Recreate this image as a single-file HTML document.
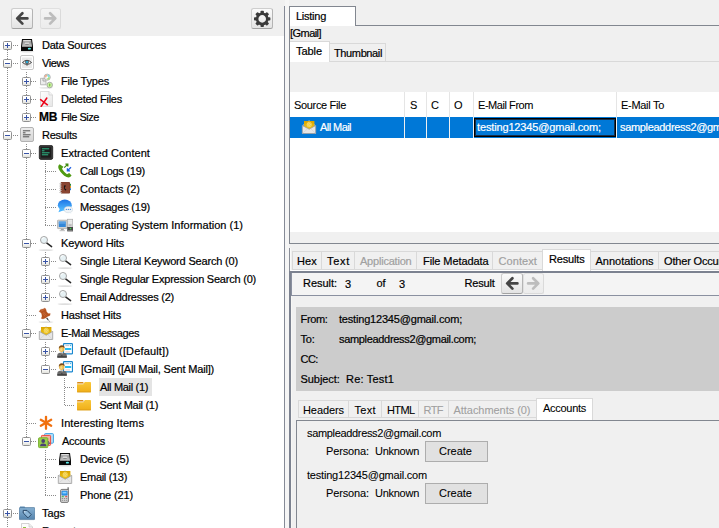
<!DOCTYPE html>
<html><head><meta charset="utf-8"><title>Autopsy</title>
<style>
html,body{margin:0;padding:0}
body{width:719px;height:528px;overflow:hidden;background:#f0f0f0;font-family:"Liberation Sans",sans-serif;font-size:11px;color:#000;position:relative}
div,span{box-sizing:border-box}
.a{position:absolute}
.t{position:absolute;white-space:nowrap;line-height:14px;height:14px;-webkit-text-stroke:0.2px currentColor}
.vd{position:absolute;width:1px;background-image:linear-gradient(to bottom,#8a8a8a 50%,rgba(255,255,255,0) 50%);background-size:1px 2px}
.hd{position:absolute;height:1px;background-image:linear-gradient(to right,#8a8a8a 50%,rgba(255,255,255,0) 50%);background-size:2px 1px}
.ex{position:absolute;width:9px;height:9px;border:1px solid #919191;background:linear-gradient(#fff 40%,#e2e2dc);border-radius:1.5px}
.ex i{position:absolute;left:1px;top:3px;width:5px;height:1px;background:#3853a6}
.ex b{position:absolute;left:3px;top:1px;width:1px;height:5px;background:#3853a6}
.ic{position:absolute;width:16px;height:16px}
.ic svg{display:block}
.tb{position:absolute;border:1px solid #adadad;background:#e1e1e1;border-radius:2.5px}
.tab{position:absolute;border:1px solid #d9d9d9;border-bottom:none;background:#f0f0f0;white-space:nowrap;line-height:14px}
.tab.sel{background:#fff}
.dis{color:#a0a0a0}
.n{-webkit-text-stroke:0.08px currentColor}
</style></head><body>

<div class="a" style="left:0;top:36px;width:284px;height:492px;background:#fff"></div>
<div class="a" style="left:285px;top:0;width:4px;height:528px;background:#f5f5f5"></div>
<div class="tb" style="left:11px;top:8px;width:22px;height:21px;background:linear-gradient(#fbfbfb,#e3e3e3);border-color:#cecece #b4b4b4 #a2a2a2 #cecece"><svg width="20" height="19" viewBox="0 0 20 19" style="display:block"><path d="M15.4 9.4H6.4M10.4 4.2L5.2 9.4L10.4 14.600000000000001" fill="none" stroke="#454545" stroke-width="2.7" stroke-linecap="round" stroke-linejoin="round"/></svg></div>
<div class="tb" style="left:40px;top:8px;width:21px;height:21px;background:linear-gradient(#f4f4f4,#ececec);border-color:#e0e0e0 #dadada #dadada #e0e0e0"><svg width="19" height="19" viewBox="0 0 19 19" style="display:block"><path d="M4.1 9.4H13.1M9.1 4.2L14.3 9.4L9.1 14.600000000000001" fill="none" stroke="#bdbdbd" stroke-width="2.7" stroke-linecap="round" stroke-linejoin="round"/></svg></div>
<div class="tb" style="left:251px;top:8px;width:22px;height:21px;background:linear-gradient(#fbfbfb,#e3e3e3);border-color:#cecece #b4b4b4 #a2a2a2 #cecece"><svg width="20" height="19" viewBox="0 0 20 19" ><g transform="translate(10.2,9.9)" fill="#3a3a3a"><rect x="-1.7" y="-8.2" width="3.4" height="3.2" rx="0.8" transform="rotate(0)"/><rect x="-1.7" y="-8.2" width="3.4" height="3.2" rx="0.8" transform="rotate(45)"/><rect x="-1.7" y="-8.2" width="3.4" height="3.2" rx="0.8" transform="rotate(90)"/><rect x="-1.7" y="-8.2" width="3.4" height="3.2" rx="0.8" transform="rotate(135)"/><rect x="-1.7" y="-8.2" width="3.4" height="3.2" rx="0.8" transform="rotate(180)"/><rect x="-1.7" y="-8.2" width="3.4" height="3.2" rx="0.8" transform="rotate(225)"/><rect x="-1.7" y="-8.2" width="3.4" height="3.2" rx="0.8" transform="rotate(270)"/><rect x="-1.7" y="-8.2" width="3.4" height="3.2" rx="0.8" transform="rotate(315)"/><circle r="5.1" fill="none" stroke="#3a3a3a" stroke-width="2.6"/></g></svg></div>
<div class="a" style="left:284px;top:6px;width:1px;height:522px;background:#858a96"></div>
<div class="vd" style="left:7px;top:46px;height:486px"></div>
<div class="vd" style="left:26px;top:72px;height:46px"></div>
<div class="vd" style="left:26px;top:144px;height:298px"></div>
<div class="vd" style="left:45px;top:162px;height:64px"></div>
<div class="vd" style="left:45px;top:252px;height:46px"></div>
<div class="vd" style="left:45px;top:342px;height:28px"></div>
<div class="vd" style="left:45px;top:450px;height:46px"></div>
<div class="vd" style="left:64px;top:378px;height:28px"></div>
<div class="hd" style="left:13px;top:45px;width:5px"></div>
<div class="ex" style="left:3px;top:41px"><i></i><b></b></div>
<div class="ic" style="left:19px;top:37px"><svg width="16" height="16" viewBox="0 0 16 16" ><defs><linearGradient id="dg" x1="0" y1="0" x2="0" y2="1"><stop offset="0" stop-color="#8e8e8e"/><stop offset="1" stop-color="#c4c4c4"/></linearGradient></defs><ellipse cx="8" cy="14.6" rx="7" ry="0.8" fill="#000" opacity="0.12"/><path d="M3 2H13L14 9.5V14H2V9.5Z" fill="#0a0a0a"/><path d="M3.8 3H12.2L13 9.8H3Z" fill="url(#dg)"/><rect x="4.3" y="3.2" width="7.4" height="1" fill="#f2f2f2"/><rect x="5.8" y="5.6" width="4.4" height="2.2" rx="0.6" fill="#d8d8d8"/><rect x="6.2" y="7" width="3.6" height="0.8" fill="#7a7a7a"/><ellipse cx="10.4" cy="11.7" rx="1.6" ry="0.9" fill="#5ef0f0"/></svg></div>
<div class="t" style="left:42px;top:38px;letter-spacing:-0.221px;">Data Sources</div>
<div class="hd" style="left:13px;top:63px;width:5px"></div>
<div class="ex" style="left:3px;top:59px"><i></i></div>
<div class="ic" style="left:19px;top:55px"><svg width="16" height="16" viewBox="0 0 16 16" ><rect x="1.5" y="0.5" width="13" height="14" rx="1.5" fill="#fff" stroke="#c6c6c6"/><rect x="3" y="2.5" width="10" height="10.5" fill="#ebebeb"/><path d="M3.5 7.5Q8 3.1 12.5 7.5Q8 11.3 3.5 7.5Z" fill="#f6f6f6" stroke="#3a3a3a" stroke-width="0.95"/><circle cx="8" cy="7.1" r="1.9" fill="#5a3a30"/><circle cx="8" cy="7.1" r="1.4" fill="#27a6d2"/><rect x="7" y="10" width="2" height="1" fill="#b0b0b0"/></svg></div>
<div class="t" style="left:42px;top:56px;letter-spacing:-0.431px;">Views</div>
<div class="hd" style="left:31px;top:81px;width:6px"></div>
<div class="ex" style="left:22px;top:77px"><i></i><b></b></div>
<div class="ic" style="left:38px;top:73px"><svg width="16" height="16" viewBox="0 0 16 16" ><ellipse cx="8" cy="14.8" rx="7" ry="0.9" fill="#000" opacity="0.10"/><path d="M2.5 5.3H8V11.8H2.5Z" fill="#ececec" stroke="#b4b4b4" stroke-width="0.9"/><path d="M5 5.3V8H8" fill="none" stroke="#a0a0a0" stroke-width="0.9"/><circle cx="9.2" cy="4.2" r="3.1" fill="#e8e8e8" stroke="#a8a8a8" stroke-width="0.8"/><path d="M9.2 1.6A2.6 2.6 0 0 1 11.8 4.2L9.2 4.2Z" fill="#7fe0e0"/><path d="M11.8 4.2A2.6 2.6 0 0 1 9.2 6.8L9.2 4.2Z" fill="#a8e07a"/><path d="M6.6 4.2A2.6 2.6 0 0 1 9.2 1.6L9.2 4.2Z" fill="#f0b090"/><circle cx="9.2" cy="4.2" r="1" fill="#fff"/><circle cx="11.7" cy="12" r="2.8" fill="#c8f0a0" stroke="#a0a0a0" stroke-width="0.8"/><rect x="11.1" y="10.6" width="1.2" height="2.8" rx="0.6" fill="#78c040"/></svg></div>
<div class="t" style="left:61px;top:74px;letter-spacing:-0.194px;">File Types</div>
<div class="hd" style="left:31px;top:99px;width:6px"></div>
<div class="ex" style="left:22px;top:95px"><i></i><b></b></div>
<div class="ic" style="left:38px;top:91px"><svg width="16" height="16" viewBox="0 0 16 16" ><defs><linearGradient id="pg" x1="0" y1="0" x2="1" y2="1"><stop offset="0" stop-color="#ffffff"/><stop offset="1" stop-color="#e6e6e6"/></linearGradient></defs><path d="M2.5 0.5H11L14.5 4V15.5H2.5Z" fill="url(#pg)" stroke="#d4d4d4" stroke-width="0.8"/><path d="M11 0.5V4H14.5" fill="#f4f4f4" stroke="#d0d0d0" stroke-width="0.7"/><path d="M2.6 8.6L9.4 13.8M8.8 7L3.2 15.4" fill="none" stroke="#ec0016" stroke-width="1.5" stroke-linecap="round"/></svg></div>
<div class="t" style="left:61px;top:92px;letter-spacing:-0.246px;">Deleted Files</div>
<div class="hd" style="left:31px;top:117px;width:6px"></div>
<div class="ex" style="left:22px;top:113px"><i></i><b></b></div>
<div class="t" style="left:38.9px;top:109.5px;font-weight:bold;font-size:12px;line-height:15px;height:15px;letter-spacing:-0.1px">MB</div>
<div class="t" style="left:61px;top:110px;letter-spacing:-0.465px;">File Size</div>
<div class="hd" style="left:13px;top:135px;width:5px"></div>
<div class="ex" style="left:3px;top:131px"><i></i></div>
<div class="ic" style="left:19px;top:127px"><svg width="16" height="16" viewBox="0 0 16 16" ><defs><linearGradient id="rg" x1="0" y1="0" x2="0" y2="1"><stop offset="0" stop-color="#ececec"/><stop offset="1" stop-color="#d6d6d6"/></linearGradient></defs><rect x="1.5" y="0.5" width="13" height="14" rx="1.5" fill="url(#rg)" stroke="#b2b2b2"/><g fill="#3a3a3a" opacity="0.85"><rect x="3.9" y="3.3" width="7.3" height="1"/><rect x="3.9" y="5.3" width="2.6" height="1"/><rect x="3.9" y="7.3" width="7.7" height="1"/><rect x="3.9" y="9.3" width="6.3" height="1"/></g></svg></div>
<div class="t" style="left:42px;top:128px;letter-spacing:-0.241px;">Results</div>
<div class="hd" style="left:31px;top:153px;width:6px"></div>
<div class="ex" style="left:22px;top:149px"><i></i></div>
<div class="ic" style="left:38px;top:145px"><svg width="16" height="16" viewBox="0 0 16 16" ><rect x="1.3" y="0.4" width="13.4" height="14" rx="1.6" fill="#333" stroke="#1e1e1e" stroke-width="0.8"/><rect x="3" y="2.2" width="10" height="10.4" fill="#1c1c1c"/><g fill="#2fd39a" opacity="0.85"><rect x="3.9" y="3.3" width="7.3" height="1"/><rect x="3.9" y="5.3" width="2.6" height="1"/><rect x="3.9" y="7.3" width="7.7" height="1"/><rect x="3.9" y="9.3" width="6.3" height="1"/></g></svg></div>
<div class="t" style="left:61px;top:146px;letter-spacing:0.055px;">Extracted Content</div>
<div class="hd" style="left:45px;top:171px;width:11px"></div>
<div class="ic" style="left:57px;top:163px"><svg width="16" height="16" viewBox="0 0 16 16" ><path d="M2.6 1.2C1 2.4 0.8 4.2 2 6.4C3.6 9.4 6.4 12.4 9.6 14C11.6 15 13.2 14.4 14.6 12.6L12.2 10L10 11.2C8 10 6.2 8 5 5.8L6.4 3.8Z" fill="#4f9a12"/><path d="M7.2 4.6L10.4 1.6M8.4 1.2H10.8V3.6" fill="none" stroke="#3d8a0c" stroke-width="1.3"/><path d="M14 4.2L10.8 7.4M10.4 5.2V7.8H13" fill="none" stroke="#1f5fe0" stroke-width="1.3"/></svg></div>
<div class="t" style="left:80px;top:164px;letter-spacing:-0.249px;">Call Logs (19)</div>
<div class="hd" style="left:45px;top:189px;width:11px"></div>
<div class="ic" style="left:57px;top:181px"><svg width="16" height="16" viewBox="0 0 16 16" ><rect x="12.4" y="2.8" width="1.6" height="2" fill="#2f8a3a"/><rect x="12.4" y="5" width="1.6" height="2" fill="#e89020"/><rect x="12.4" y="7.2" width="1.6" height="2" fill="#2878c8"/><rect x="3.6" y="1" width="9.4" height="11.6" rx="1" fill="#7b3a2a"/><rect x="4.4" y="1.6" width="8" height="10.4" rx="0.8" fill="#8a4633"/><path d="M7.4 4.2C6.6 5.6 6.8 8 8.2 9.6L9.4 9L8.8 7.8L8.2 8C7.8 7.2 7.8 6.4 8 5.8L8.6 5.8L8.6 4.2Z" fill="#141414"/><g fill="#c8c8c8"><rect x="2.2" y="2.4" width="2.4" height="0.9"/><rect x="2.2" y="4.6" width="2.4" height="0.9"/><rect x="2.2" y="6.8" width="2.4" height="0.9"/><rect x="2.2" y="9" width="2.4" height="0.9"/><rect x="2.2" y="11" width="2.4" height="0.9"/></g></svg></div>
<div class="t" style="left:80px;top:182px;letter-spacing:0.007px;">Contacts (2)</div>
<div class="hd" style="left:45px;top:207px;width:11px"></div>
<div class="ic" style="left:57px;top:199px"><svg width="16" height="16" viewBox="0 0 16 16" ><defs><linearGradient id="mg" x1="0" y1="0" x2="0" y2="1"><stop offset="0" stop-color="#1c74e6"/><stop offset="1" stop-color="#56c0ff"/></linearGradient></defs><ellipse cx="7.8" cy="6.2" rx="7" ry="5.6" fill="url(#mg)"/><path d="M3 9.5L1.4 13.2L6 11.4Z" fill="#4ab4ff"/><ellipse cx="11.4" cy="10.6" rx="4.2" ry="3.1" fill="#eef3f7" stroke="#c4d0d8" stroke-width="0.5"/><path d="M13 12.8L14.6 14.8L11.6 13.4Z" fill="#e4ebf0"/><circle cx="9.4" cy="10.4" r="0.7" fill="#5a98e0"/><circle cx="11.4" cy="10.4" r="0.7" fill="#5a98e0"/><circle cx="13.4" cy="10.4" r="0.7" fill="#5a98e0"/></svg></div>
<div class="t" style="left:80px;top:200px;letter-spacing:-0.213px;">Messages (19)</div>
<div class="hd" style="left:45px;top:225px;width:11px"></div>
<div class="ic" style="left:57px;top:217px"><svg width="16" height="16" viewBox="0 0 16 16" ><rect x="0.4" y="3.2" width="9.8" height="8.4" rx="0.8" fill="#d2d2d2" stroke="#a4a4a4" stroke-width="0.7"/><rect x="1.8" y="4.6" width="7" height="5.4" fill="#3487d8"/><rect x="1.8" y="4.6" width="7" height="2.2" fill="#5aa2e6"/><rect x="3.8" y="11.8" width="3" height="1.6" fill="#a0a0a0"/><rect x="2.6" y="13.2" width="5.4" height="1" fill="#c0c0c0"/><rect x="10.4" y="2.2" width="5.4" height="8" fill="#dcdcdc" stroke="#a4a4a4" stroke-width="0.6"/><rect x="11.2" y="3.4" width="3.8" height="1" fill="#f4f4f4"/><rect x="11.2" y="5.4" width="3.8" height="1" fill="#f4f4f4"/><rect x="11.6" y="7.4" width="3" height="1.4" fill="#b4b4b4"/><rect x="10.2" y="10" width="5.8" height="4.4" fill="#4a4a4a"/><rect x="12.8" y="11" width="1.4" height="1.2" fill="#38e048"/><rect x="10.6" y="13" width="5" height="0.8" fill="#8a8a8a"/></svg></div>
<div class="t" style="left:80px;top:218px;letter-spacing:0.012px;">Operating System Information (1)</div>
<div class="hd" style="left:31px;top:243px;width:6px"></div>
<div class="ex" style="left:22px;top:239px"><i></i></div>
<div class="ic" style="left:38px;top:235px"><svg width="16" height="16" viewBox="0 0 16 16" ><ellipse cx="8" cy="15.1" rx="7.6" ry="0.8" fill="#000" opacity="0.13"/><path d="M8.6 7.8L13.6 11.6" stroke="#262626" stroke-width="1.5" stroke-linecap="round"/><circle cx="6" cy="5" r="3.5" fill="#e6f1f4" stroke="#a6a6a6" stroke-width="1"/><path d="M3.8 4.4A2.4 2.4 0 0 1 6.4 2.6" fill="none" stroke="#fff" stroke-width="0.9"/></svg></div>
<div class="t" style="left:61px;top:236px;letter-spacing:-0.150px;">Keyword Hits</div>
<div class="hd" style="left:51px;top:261px;width:5px"></div>
<div class="ex" style="left:41px;top:257px"><i></i><b></b></div>
<div class="ic" style="left:57px;top:253px"><svg width="16" height="16" viewBox="0 0 16 16" ><ellipse cx="8" cy="15.1" rx="7.6" ry="0.8" fill="#000" opacity="0.13"/><path d="M8.6 7.8L13.6 11.6" stroke="#262626" stroke-width="1.5" stroke-linecap="round"/><circle cx="6" cy="5" r="3.5" fill="#e6f1f4" stroke="#a6a6a6" stroke-width="1"/><path d="M3.8 4.4A2.4 2.4 0 0 1 6.4 2.6" fill="none" stroke="#fff" stroke-width="0.9"/></svg></div>
<div class="t" style="left:80px;top:254px;letter-spacing:-0.178px;">Single Literal Keyword Search (0)</div>
<div class="hd" style="left:51px;top:279px;width:5px"></div>
<div class="ex" style="left:41px;top:275px"><i></i><b></b></div>
<div class="ic" style="left:57px;top:271px"><svg width="16" height="16" viewBox="0 0 16 16" ><ellipse cx="8" cy="15.1" rx="7.6" ry="0.8" fill="#000" opacity="0.13"/><path d="M8.6 7.8L13.6 11.6" stroke="#262626" stroke-width="1.5" stroke-linecap="round"/><circle cx="6" cy="5" r="3.5" fill="#e6f1f4" stroke="#a6a6a6" stroke-width="1"/><path d="M3.8 4.4A2.4 2.4 0 0 1 6.4 2.6" fill="none" stroke="#fff" stroke-width="0.9"/></svg></div>
<div class="t" style="left:80px;top:272px;letter-spacing:-0.224px;">Single Regular Expression Search (0)</div>
<div class="hd" style="left:51px;top:297px;width:5px"></div>
<div class="ex" style="left:41px;top:293px"><i></i><b></b></div>
<div class="ic" style="left:57px;top:289px"><svg width="16" height="16" viewBox="0 0 16 16" ><ellipse cx="8" cy="15.1" rx="7.6" ry="0.8" fill="#000" opacity="0.13"/><path d="M8.6 7.8L13.6 11.6" stroke="#262626" stroke-width="1.5" stroke-linecap="round"/><circle cx="6" cy="5" r="3.5" fill="#e6f1f4" stroke="#a6a6a6" stroke-width="1"/><path d="M3.8 4.4A2.4 2.4 0 0 1 6.4 2.6" fill="none" stroke="#fff" stroke-width="0.9"/></svg></div>
<div class="t" style="left:80px;top:290px;letter-spacing:-0.234px;">Email Addresses (2)</div>
<div class="hd" style="left:27px;top:315px;width:10px"></div>
<div class="ic" style="left:38px;top:307px"><svg width="16" height="16" viewBox="0 0 16 16" ><ellipse cx="8" cy="15.1" rx="7.6" ry="0.8" fill="#000" opacity="0.12"/><path d="M8.6 10.8L10.2 12.8" stroke="#3c3c3c" stroke-width="1.2"/><path d="M10.2 12.8L11.8 14.8" stroke="#9a9a9a" stroke-width="1"/><path d="M1 4.4L2.6 2.4L5 1.9L7 0.9L8 2.6L8.6 4.8L10.2 6.5L12.3 6.4L12 8.4L9.6 9.6L7.6 11L5 12L3.2 11.4L4 9.2L3.6 6.8L2.6 5.6Z" fill="#b5531f" stroke="#b5531f" stroke-width="0.2" stroke-linejoin="round"/><path d="M2.6 4.2L6.6 2.4M4.8 6.2L7 9.4M5.4 5L8.4 8.4" stroke="#cc6f42" stroke-width="0.8" fill="none" opacity="0.9"/></svg></div>
<div class="t" style="left:61px;top:308px;letter-spacing:-0.197px;">Hashset Hits</div>
<div class="hd" style="left:31px;top:333px;width:6px"></div>
<div class="ex" style="left:22px;top:329px"><i></i></div>
<div class="ic" style="left:38px;top:325px"><svg width="16" height="16" viewBox="0 0 16 16" ><defs><linearGradient id="yg" x1="0" y1="0" x2="0" y2="1"><stop offset="0" stop-color="#d9a400"/><stop offset="1" stop-color="#f3c81e"/></linearGradient></defs><path d="M1.3 6.6L3 5V6.6Z M14.7 6.6L13 5V6.6Z" fill="#c8c8c8"/><rect x="3" y="2" width="10.4" height="9" fill="url(#yg)"/><path d="M7.4 1.4H8.8V2.2H7.4Z" fill="#c8c8c8"/><circle cx="8.2" cy="5.4" r="2.5" fill="#f7dc6a"/><path d="M6.4 3.8L10 7M6 5.6L8.4 7.8M8 3.2L10.4 5.4" stroke="#e6bc2a" stroke-width="0.5" fill="none"/><path d="M1.3 6.4L8.2 10.2L14.7 6.4V14.5H1.3Z" fill="#e6e6e6" stroke="#9c9c9c" stroke-width="0.8" stroke-linejoin="round"/><path d="M1.6 14.2L6.6 9.8M14.4 14.2L9.8 9.8" stroke="#d2d2d2" stroke-width="0.7" fill="none"/></svg></div>
<div class="t" style="left:61px;top:326px;letter-spacing:-0.424px;">E-Mail Messages</div>
<div class="hd" style="left:51px;top:351px;width:5px"></div>
<div class="ex" style="left:41px;top:347px"><i></i><b></b></div>
<div class="ic" style="left:57px;top:343px"><svg width="16" height="16" viewBox="0 0 16 16" ><rect x="6.5" y="0.7" width="9" height="10.2" rx="0.8" fill="#fff" stroke="#1a88d0" stroke-width="1.2"/><rect x="8.4" y="2.3" width="3.8" height="0.8" fill="#aab8c4"/><circle cx="13.6" cy="2.6" r="0.7" fill="#28b0ea"/><rect x="8" y="5" width="6.2" height="2" fill="#27bdf0"/><rect x="8.4" y="8.6" width="4.6" height="0.7" fill="#f0b4a4"/><path d="M0.3 14.6V12.4C0.3 10.6 2 9.6 4.8 9.6C7.6 9.6 9.8 10.6 9.8 12.4V14.6Z" fill="#6a6a6a"/><path d="M0.3 13.2H9.8V14.7H0.3Z" fill="#3e3e3e"/><path d="M3.6 9.6L4.8 12.6L6 9.6Z" fill="#f4f4f4"/><rect x="4.45" y="9.8" width="0.8" height="3.4" fill="#262626"/><ellipse cx="4.7" cy="6" rx="2.7" ry="3" fill="#e9b84e"/><path d="M1.9 6C1.5 3.4 2.8 2.2 4.8 2.2C6.8 2.2 7.9 3.4 7.5 5.6C7 4.6 6.2 4.1 4.9 4.1C3.5 4.1 2.5 4.8 1.9 6Z" fill="#7b4a17"/><ellipse cx="4.3" cy="6.6" rx="1.2" ry="1.6" fill="#f7dd90" opacity="0.85"/></svg></div>
<div class="t" style="left:80px;top:344px;letter-spacing:0.147px;">Default ([Default])</div>
<div class="hd" style="left:51px;top:369px;width:5px"></div>
<div class="ex" style="left:41px;top:365px"><i></i></div>
<div class="ic" style="left:57px;top:361px"><svg width="16" height="16" viewBox="0 0 16 16" ><rect x="6.5" y="0.7" width="9" height="10.2" rx="0.8" fill="#fff" stroke="#1a88d0" stroke-width="1.2"/><rect x="8.4" y="2.3" width="3.8" height="0.8" fill="#aab8c4"/><circle cx="13.6" cy="2.6" r="0.7" fill="#28b0ea"/><rect x="8" y="5" width="6.2" height="2" fill="#27bdf0"/><rect x="8.4" y="8.6" width="4.6" height="0.7" fill="#f0b4a4"/><path d="M0.3 14.6V12.4C0.3 10.6 2 9.6 4.8 9.6C7.6 9.6 9.8 10.6 9.8 12.4V14.6Z" fill="#6a6a6a"/><path d="M0.3 13.2H9.8V14.7H0.3Z" fill="#3e3e3e"/><path d="M3.6 9.6L4.8 12.6L6 9.6Z" fill="#f4f4f4"/><rect x="4.45" y="9.8" width="0.8" height="3.4" fill="#262626"/><ellipse cx="4.7" cy="6" rx="2.7" ry="3" fill="#e9b84e"/><path d="M1.9 6C1.5 3.4 2.8 2.2 4.8 2.2C6.8 2.2 7.9 3.4 7.5 5.6C7 4.6 6.2 4.1 4.9 4.1C3.5 4.1 2.5 4.8 1.9 6Z" fill="#7b4a17"/><ellipse cx="4.3" cy="6.6" rx="1.2" ry="1.6" fill="#f7dd90" opacity="0.85"/></svg></div>
<div class="t" style="left:81px;top:362px;letter-spacing:-0.185px;">[Gmail] ([All Mail, Sent Mail])</div>
<div class="hd" style="left:65px;top:387px;width:10px"></div>
<div class="a" style="left:99px;top:378px;width:53px;height:18px;background:#e4e4e4"></div>
<div class="ic" style="left:76px;top:379px"><svg width="16" height="16" viewBox="0 0 16 16" ><defs><linearGradient id="fg" x1="0" y1="0" x2="0" y2="1"><stop offset="0" stop-color="#f9c83a"/><stop offset="1" stop-color="#f0ae18"/></linearGradient></defs><path d="M1 4.2C1 3.5 1.4 3 2 3H7L8 4.6H1Z" fill="#d88a1a"/><path d="M1 5.2H7.4L8.8 3H14.2C14.7 3 15 3.3 15 3.8V12.5C15 13 14.7 13.3 14.2 13.3H1.8C1.3 13.3 1 13 1 12.5Z" fill="url(#fg)"/><rect x="1" y="12.6" width="14" height="0.7" fill="#d89a18"/></svg></div>
<div class="t" style="left:100px;top:380px;letter-spacing:-0.329px;">All Mail (1)</div>
<div class="hd" style="left:65px;top:405px;width:10px"></div>
<div class="ic" style="left:76px;top:397px"><svg width="16" height="16" viewBox="0 0 16 16" ><defs><linearGradient id="fg" x1="0" y1="0" x2="0" y2="1"><stop offset="0" stop-color="#f9c83a"/><stop offset="1" stop-color="#f0ae18"/></linearGradient></defs><path d="M1 4.2C1 3.5 1.4 3 2 3H7L8 4.6H1Z" fill="#d88a1a"/><path d="M1 5.2H7.4L8.8 3H14.2C14.7 3 15 3.3 15 3.8V12.5C15 13 14.7 13.3 14.2 13.3H1.8C1.3 13.3 1 13 1 12.5Z" fill="url(#fg)"/><rect x="1" y="12.6" width="14" height="0.7" fill="#d89a18"/></svg></div>
<div class="t" style="left:99.5px;top:398px;letter-spacing:-0.297px;">Sent Mail (1)</div>
<div class="hd" style="left:27px;top:423px;width:10px"></div>
<div class="ic" style="left:38px;top:415px"><svg width="16" height="16" viewBox="0 0 16 16" ><g transform="translate(8,7.8)" stroke="#f0700f" stroke-width="2.3" stroke-linecap="round"><path d="M0 0V-6" transform="rotate(0)"/><path d="M0 0V-6" transform="rotate(60)"/><path d="M0 0V-6" transform="rotate(120)"/><path d="M0 0V-6" transform="rotate(180)"/><path d="M0 0V-6" transform="rotate(240)"/><path d="M0 0V-6" transform="rotate(300)"/></g></svg></div>
<div class="t" style="left:61px;top:416px;letter-spacing:0.098px;">Interesting Items</div>
<div class="hd" style="left:31px;top:441px;width:6px"></div>
<div class="ex" style="left:22px;top:437px"><i></i></div>
<div class="ic" style="left:38px;top:433px"><svg width="16" height="16" viewBox="0 0 16 16" ><rect x="6.6" y="0.6" width="8.8" height="9.6" rx="0.8" fill="#b8e0f8" stroke="#3ea4e4" stroke-width="1"/><rect x="3.4" y="2.4" width="9.2" height="10" rx="0.8" fill="#f8b0a0" stroke="#f0483a" stroke-width="1"/><path d="M10.4 8V12M11.4 9.4V11" stroke="#5a4a78" stroke-width="0.9"/><rect x="0.6" y="4.8" width="9.2" height="9.8" rx="0.8" fill="#9ad04a" stroke="#78b032" stroke-width="1"/><circle cx="5.2" cy="8" r="1.9" fill="#4b4272"/><path d="M2 13.2C2 11 3.4 10.4 5.2 10.4C7 10.4 8.4 11 8.4 13.2Z" fill="#4b4272"/></svg></div>
<div class="t" style="left:62px;top:434px;letter-spacing:-0.281px;">Accounts</div>
<div class="hd" style="left:45px;top:459px;width:11px"></div>
<div class="ic" style="left:57px;top:451px"><svg width="16" height="16" viewBox="0 0 16 16" ><defs><linearGradient id="dg" x1="0" y1="0" x2="0" y2="1"><stop offset="0" stop-color="#8e8e8e"/><stop offset="1" stop-color="#c4c4c4"/></linearGradient></defs><ellipse cx="8" cy="14.6" rx="7" ry="0.8" fill="#000" opacity="0.12"/><path d="M3 2H13L14 9.5V14H2V9.5Z" fill="#0a0a0a"/><path d="M3.8 3H12.2L13 9.8H3Z" fill="url(#dg)"/><rect x="4.3" y="3.2" width="7.4" height="1" fill="#f2f2f2"/><rect x="5.8" y="5.6" width="4.4" height="2.2" rx="0.6" fill="#d8d8d8"/><rect x="6.2" y="7" width="3.6" height="0.8" fill="#7a7a7a"/><ellipse cx="10.4" cy="11.7" rx="1.6" ry="0.9" fill="#5ef0f0"/></svg></div>
<div class="t" style="left:80px;top:452px;letter-spacing:-0.113px;">Device (5)</div>
<div class="hd" style="left:45px;top:477px;width:11px"></div>
<div class="ic" style="left:57px;top:469px"><svg width="16" height="16" viewBox="0 0 16 16" ><defs><linearGradient id="yg" x1="0" y1="0" x2="0" y2="1"><stop offset="0" stop-color="#d9a400"/><stop offset="1" stop-color="#f3c81e"/></linearGradient></defs><path d="M1.3 6.6L3 5V6.6Z M14.7 6.6L13 5V6.6Z" fill="#c8c8c8"/><rect x="3" y="2" width="10.4" height="9" fill="url(#yg)"/><path d="M7.4 1.4H8.8V2.2H7.4Z" fill="#c8c8c8"/><circle cx="8.2" cy="5.4" r="2.5" fill="#f7dc6a"/><path d="M6.4 3.8L10 7M6 5.6L8.4 7.8M8 3.2L10.4 5.4" stroke="#e6bc2a" stroke-width="0.5" fill="none"/><path d="M1.3 6.4L8.2 10.2L14.7 6.4V14.5H1.3Z" fill="#e6e6e6" stroke="#9c9c9c" stroke-width="0.8" stroke-linejoin="round"/><path d="M1.6 14.2L6.6 9.8M14.4 14.2L9.8 9.8" stroke="#d2d2d2" stroke-width="0.7" fill="none"/></svg></div>
<div class="t" style="left:80px;top:470px;letter-spacing:-0.312px;">Email (13)</div>
<div class="hd" style="left:45px;top:495px;width:11px"></div>
<div class="ic" style="left:57px;top:487px"><svg width="16" height="16" viewBox="0 0 16 16" ><rect x="10.6" y="0.3" width="1" height="3" fill="#3a3a3a"/><rect x="3.6" y="2.4" width="7.8" height="13" rx="1.2" fill="#d6d6d6" stroke="#5a5a5a" stroke-width="0.8"/><rect x="4.8" y="4" width="5.4" height="4.2" rx="0.5" fill="#2f9cf2" stroke="#1a6cc0" stroke-width="0.5"/><rect x="5.6" y="4.8" width="3.8" height="1.6" fill="#8ad0ff"/><rect x="4.8" y="9.2" width="2" height="1" fill="#38b838"/><rect x="8.2" y="9.2" width="2" height="1" fill="#e03a3a"/><g fill="#8e8e8e"><rect x="4.8" y="11" width="1.3" height="1"/><rect x="6.9" y="11" width="1.3" height="1"/><rect x="8.9" y="11" width="1.3" height="1"/><rect x="4.8" y="12.8" width="1.3" height="1"/><rect x="6.9" y="12.8" width="1.3" height="1"/><rect x="8.9" y="12.8" width="1.3" height="1"/></g></svg></div>
<div class="t" style="left:80px;top:488px;letter-spacing:-0.144px;">Phone (21)</div>
<div class="hd" style="left:13px;top:513px;width:5px"></div>
<div class="ex" style="left:3px;top:509px"><i></i><b></b></div>
<div class="ic" style="left:19px;top:505px"><svg width="16" height="16" viewBox="0 0 16 16" ><defs><linearGradient id="tg" x1="0" y1="0" x2="0" y2="1"><stop offset="0" stop-color="#86b0d2"/><stop offset="1" stop-color="#5583ac"/></linearGradient></defs><path d="M1 1.6H5.6L6.4 3H1Z" fill="#5e8cb4"/><rect x="0.2" y="2.6" width="15.6" height="12" rx="0.8" fill="url(#tg)" stroke="#3f6a90" stroke-width="0.6"/><path d="M4.2 5.4H8L12.2 9.6L9 12.8L4.2 8Z" fill="#8db6d8" stroke="#24405e" stroke-width="0.9" stroke-linejoin="round"/><circle cx="5.8" cy="6.8" r="0.7" fill="#dfe8f0"/></svg></div>
<div class="t" style="left:42px;top:506px;letter-spacing:-0.062px;">Tags</div>
<div class="hd" style="left:7px;top:531px;width:11px"></div>
<div class="ic" style="left:19px;top:523px"><svg width="16" height="16" viewBox="0 0 16 16" ><path d="M2.5 0.5H10L13.5 4V15.5H2.5Z" fill="#fcfcfc" stroke="#c8c8c8" stroke-width="0.8"/><path d="M10 0.5V4H13.5" fill="#eee" stroke="#c8c8c8" stroke-width="0.7"/><rect x="4" y="4" width="3" height="3" fill="#8ac040"/></svg></div>
<div class="t" style="left:42px;top:524px;letter-spacing:0.210px;">Reports</div>
<div class="a" style="left:289px;top:25px;width:431px;height:219px;border:1px solid #828790;border-right:none"></div>
<div class="a" style="left:289px;top:6px;width:67px;height:20px;border:1px solid #828790;border-bottom:none;background:#fff"></div>
<div class="t" style="left:296px;top:9px;letter-spacing:-0.257px;">Listing</div>
<div class="t" style="left:290px;top:26px;letter-spacing:-0.549px;">[Gmail]</div>
<div class="a" style="left:290px;top:61px;width:429px;height:1px;background:#d9d9d9"></div>
<div class="tab sel" style="left:290px;top:41px;width:40px;height:21px;border-left:none"></div>
<div class="t" style="left:296px;top:44px;letter-spacing:-0.059px;">Table</div>
<div class="tab" style="left:329px;top:43px;width:57px;height:18px"></div>
<div class="t" style="left:334px;top:46px;letter-spacing:-0.373px;">Thumbnail</div>
<div class="a" style="left:290px;top:92px;width:429px;height:140px;background:#fff"></div>
<div class="a" style="left:404px;top:92px;width:1px;height:25px;background:#e5e5e5"></div>
<div class="a" style="left:426px;top:92px;width:1px;height:25px;background:#e5e5e5"></div>
<div class="a" style="left:449px;top:92px;width:1px;height:25px;background:#e5e5e5"></div>
<div class="a" style="left:473px;top:92px;width:1px;height:25px;background:#e5e5e5"></div>
<div class="a" style="left:616px;top:92px;width:1px;height:25px;background:#e5e5e5"></div>
<div class="t n" style="left:294px;top:98px;letter-spacing:-0.331px;">Source File</div>
<div class="t n" style="left:410px;top:98px;letter-spacing:-0.600px;">S</div>
<div class="t n" style="left:431px;top:98px;letter-spacing:-0.600px;">C</div>
<div class="t n" style="left:454px;top:98px;letter-spacing:-0.562px;">O</div>
<div class="t n" style="left:478px;top:98px;letter-spacing:-0.445px;">E-Mail From</div>
<div class="t n" style="left:621px;top:98px;letter-spacing:-0.295px;">E-Mail To</div>
<div class="a" style="left:290px;top:117px;width:429px;height:21px;background:#0078d7"></div>
<div class="a" style="left:404px;top:117px;width:1px;height:21px;background:#f0f0f0"></div>
<div class="a" style="left:426px;top:117px;width:1px;height:21px;background:#f0f0f0"></div>
<div class="a" style="left:449px;top:117px;width:1px;height:21px;background:#f0f0f0"></div>
<div class="a" style="left:473px;top:117px;width:1px;height:21px;background:#f0f0f0"></div>
<div class="a" style="left:616px;top:117px;width:1px;height:21px;background:#f0f0f0"></div>
<div class="a" style="left:474px;top:118px;width:142px;height:19px;border:1px solid #000;outline:1px solid #15304d;outline-offset:-2px"></div>
<div class="ic" style="left:301px;top:119px"><svg width="16" height="16" viewBox="0 0 16 16" ><defs><linearGradient id="yg" x1="0" y1="0" x2="0" y2="1"><stop offset="0" stop-color="#d9a400"/><stop offset="1" stop-color="#f3c81e"/></linearGradient></defs><path d="M1.3 6.6L3 5V6.6Z M14.7 6.6L13 5V6.6Z" fill="#c8c8c8"/><rect x="3" y="2" width="10.4" height="9" fill="url(#yg)"/><path d="M7.4 1.4H8.8V2.2H7.4Z" fill="#c8c8c8"/><circle cx="8.2" cy="5.4" r="2.5" fill="#f7dc6a"/><path d="M6.4 3.8L10 7M6 5.6L8.4 7.8M8 3.2L10.4 5.4" stroke="#e6bc2a" stroke-width="0.5" fill="none"/><path d="M1.3 6.4L8.2 10.2L14.7 6.4V14.5H1.3Z" fill="#e6e6e6" stroke="#9c9c9c" stroke-width="0.8" stroke-linejoin="round"/><path d="M1.6 14.2L6.6 9.8M14.4 14.2L9.8 9.8" stroke="#d2d2d2" stroke-width="0.7" fill="none"/></svg></div>
<div class="t" style="left:320px;top:120px;color:#fff;letter-spacing:-0.557px;">All Mail</div>
<div class="t" style="left:477px;top:120px;color:#fff;letter-spacing:-0.145px;">testing12345@gmail.com;</div>
<div class="t" style="left:620px;top:120px;color:#fff;letter-spacing:-0.323px;">sampleaddress2@gmail.com;</div>
<div class="a" style="left:289px;top:248px;width:1px;height:280px;background:#8a8e98"></div>
<div class="a" style="left:290px;top:248px;width:1px;height:23px;background:#fafafa"></div>
<div class="a" style="left:291px;top:270px;width:428px;height:1px;background:#fff"></div>
<div class="a" style="left:289px;top:271px;width:2px;height:257px;background:#7c8290"></div>
<div class="a" style="left:291px;top:296px;width:1px;height:232px;background:#f7f7f5"></div>
<div class="a" style="left:291px;top:271px;width:1px;height:25px;background:#8a90a0"></div>
<div class="tab" style="left:292px;top:251px;width:30px;height:19px;border-bottom:1px solid #d9d9d9"></div>
<div class="t" style="left:297px;top:254px;letter-spacing:0.146px;">Hex</div>
<div class="tab" style="left:321px;top:251px;width:34px;height:19px;border-bottom:1px solid #d9d9d9"></div>
<div class="t" style="left:327px;top:254px;letter-spacing:0.703px;">Text</div>
<div class="tab" style="left:354px;top:251px;width:63px;height:19px;border-bottom:1px solid #d9d9d9"></div>
<div class="t dis" style="left:360px;top:254px;letter-spacing:-0.212px;">Application</div>
<div class="tab" style="left:416px;top:251px;width:77px;height:19px;border-bottom:1px solid #d9d9d9"></div>
<div class="t" style="left:423px;top:254px;letter-spacing:-0.089px;">File Metadata</div>
<div class="tab" style="left:492px;top:251px;width:51px;height:19px;border-bottom:1px solid #d9d9d9"></div>
<div class="t dis" style="left:498.5px;top:254px;letter-spacing:0.083px;">Context</div>
<div class="tab sel" style="left:542px;top:249px;width:49px;height:22px"></div>
<div class="t" style="left:549px;top:252px;letter-spacing:-0.170px;">Results</div>
<div class="tab" style="left:590px;top:251px;width:69px;height:19px;border-bottom:1px solid #d9d9d9"></div>
<div class="t" style="left:595.5px;top:254px;letter-spacing:-0.010px;">Annotations</div>
<div class="tab" style="left:658px;top:251px;width:103px;height:19px;border-bottom:1px solid #d9d9d9"></div>
<div class="t" style="left:664px;top:254px;letter-spacing:-0.172px;">Other Occurrences</div>
<div class="a" style="left:291px;top:271px;width:428px;height:2px;background:#7c8290"></div>
<div class="a" style="left:292px;top:273px;width:427px;height:22px;background:#f4f4f4"></div>
<div class="a" style="left:291px;top:295px;width:428px;height:1px;background:#8a90a0"></div>
<div class="t" style="left:303px;top:276px;letter-spacing:-0.036px;">Result:</div>
<div class="t" style="left:345px;top:277px">3</div>
<div class="t" style="left:376.5px;top:276px">of</div>
<div class="t" style="left:399px;top:277px">3</div>
<div class="t" style="left:464.5px;top:276px;letter-spacing:-0.198px;">Result</div>
<div class="tb" style="left:501px;top:273px;width:22px;height:21px;background:linear-gradient(#fbfbfb,#e3e3e3);border-color:#cecece #b4b4b4 #a2a2a2 #cecece"><svg width="20" height="19" viewBox="0 0 20 19" style="display:block"><path d="M15.4 9.4H6.4M10.4 4.2L5.2 9.4L10.4 14.600000000000001" fill="none" stroke="#454545" stroke-width="2.7" stroke-linecap="round" stroke-linejoin="round"/></svg></div>
<div class="tb" style="left:523px;top:273px;width:21px;height:21px;background:linear-gradient(#f4f4f4,#ececec);border-color:#e0e0e0 #dadada #dadada #e0e0e0"><svg width="19" height="19" viewBox="0 0 19 19" style="display:block"><path d="M4.1 9.4H13.1M9.1 4.2L14.3 9.4L9.1 14.600000000000001" fill="none" stroke="#bdbdbd" stroke-width="2.7" stroke-linecap="round" stroke-linejoin="round"/></svg></div>
<div class="a" style="left:296px;top:307px;width:423px;height:84px;background:#cccccc"></div>
<div class="t" style="left:300.6px;top:312px;letter-spacing:-0.347px;">From:</div>
<div class="t" style="left:300.6px;top:332px;letter-spacing:-0.229px;">To:</div>
<div class="t" style="left:300.6px;top:352px;letter-spacing:-0.600px;">CC:</div>
<div class="t" style="left:300.6px;top:372px;letter-spacing:-0.094px;">Subject:</div>
<div class="t" style="left:339px;top:312px;letter-spacing:-0.189px;">testing12345@gmail.com;</div>
<div class="t" style="left:339px;top:332px;letter-spacing:-0.323px;">sampleaddress2@gmail.com;</div>
<div class="t" style="left:346px;top:372px;letter-spacing:0.191px;">Re: Test1</div>
<div class="tab" style="left:298px;top:400px;width:51px;height:18px;border-bottom:1px solid #d9d9d9"></div>
<div class="t n" style="left:303px;top:403px;letter-spacing:-0.083px;">Headers</div>
<div class="tab" style="left:348px;top:400px;width:34px;height:18px;border-bottom:1px solid #d9d9d9"></div>
<div class="t n" style="left:354.5px;top:403px;letter-spacing:0.328px;">Text</div>
<div class="tab" style="left:381px;top:400px;width:38px;height:18px;border-bottom:1px solid #d9d9d9"></div>
<div class="t n" style="left:387px;top:403px;letter-spacing:-0.600px;">HTML</div>
<div class="tab" style="left:418px;top:400px;width:31px;height:18px;border-bottom:1px solid #d9d9d9"></div>
<div class="t n dis" style="left:423.5px;top:403px;letter-spacing:-0.600px;">RTF</div>
<div class="tab" style="left:448px;top:400px;width:89px;height:18px;border-bottom:1px solid #d9d9d9"></div>
<div class="t n dis" style="left:453.5px;top:403px;letter-spacing:-0.043px;">Attachments (0)</div>
<div class="tab sel" style="left:536px;top:398px;width:57px;height:22px"></div>
<div class="t n" style="left:543px;top:401px;letter-spacing:-0.281px;">Accounts</div>
<div class="a" style="left:296px;top:420px;width:424px;height:110px;border:1px solid #828790"></div>
<div class="t n" style="left:307px;top:426px;letter-spacing:-0.334px;">sampleaddress2@gmail.com</div>
<div class="t n" style="left:326px;top:444px;letter-spacing:-0.129px;">Persona:</div>
<div class="t n" style="left:375px;top:444px;letter-spacing:-0.266px;">Unknown</div>
<div class="a" style="left:425px;top:441px;width:63px;height:21px;border:1px solid #adadad;background:#e1e1e1"></div>
<div class="t n" style="left:439px;top:444px;letter-spacing:-0.005px;">Create</div>
<div class="t n" style="left:307px;top:468px;letter-spacing:-0.195px;">testing12345@gmail.com</div>
<div class="t n" style="left:326px;top:486px;letter-spacing:-0.129px;">Persona:</div>
<div class="t n" style="left:375px;top:486px;letter-spacing:-0.266px;">Unknown</div>
<div class="a" style="left:425px;top:483px;width:63px;height:21px;border:1px solid #adadad;background:#e1e1e1"></div>
<div class="t n" style="left:439px;top:486px;letter-spacing:-0.005px;">Create</div>
</body></html>
